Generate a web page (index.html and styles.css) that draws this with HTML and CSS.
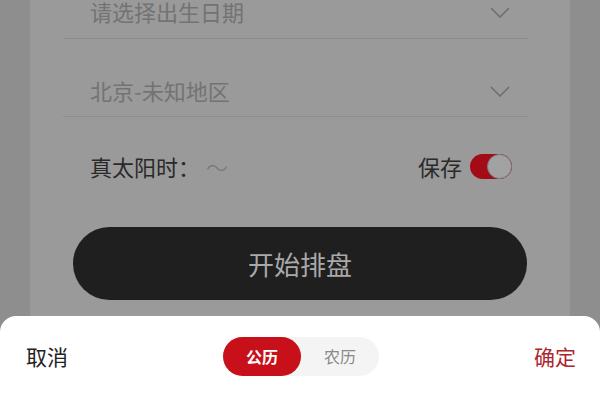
FILE: index.html
```html
<!DOCTYPE html>
<html lang="zh-CN">
<head>
    <meta charset="UTF-8">
    <meta name="viewport" content="width=device-width, initial-scale=1.0">
    <title>排盘</title>
    <link rel="stylesheet" href="styles.css">
</head>
<body>
    <div class="page">
        <div class="card">
            <!-- birth date picker -->
            <div class="field first">
                <span class="placeholder">请选择出生日期</span>
                <svg class="chevron" width="20" height="11" viewBox="0 0 20 11"><polyline points="1,1 10,10 19,1" fill="none" stroke="#6f6f6f" stroke-width="1.6"/></svg>
            </div>
            <!-- place picker -->
            <div class="field">
                <span class="placeholder">北京-未知地区</span>
                <svg class="chevron" width="20" height="11" viewBox="0 0 20 11"><polyline points="1,1 10,10 19,1" fill="none" stroke="#6f6f6f" stroke-width="1.6"/></svg>
            </div>

            <div class="sun-row">
                <span class="sun-label">真太阳时：<span class="tilde">～</span></span>
                <span class="save">
                    保存
                    <span class="toggle"><span class="knob"></span></span>
                </span>
            </div>

            <button class="start">开始排盘</button>
        </div>

        <!-- bottom sheet over the dimmed page -->
        <div class="sheet">
            <div class="sheet-head">
                <span class="cancel">取消</span>
                <div class="seg">
                    <span class="seg-item active">公历</span>
                    <span class="seg-item">农历</span>
                </div>
                <span class="ok">确定</span>
            </div>
        </div>
    </div>
</body>
</html>
```

FILE: styles.css
```css
body {
    margin: 0;
    font-family: "Noto Sans CJK SC", "Noto Sans", sans-serif;
    background-color: #8e8e8e;
}
.page {
    position: relative;
    width: 600px;
    height: 400px;
    overflow: hidden;
}
.card {
    margin: 0 30px;
    height: 100%;
    background-color: #9a9a9a;
    display: flex;
    flex-direction: column;
}
.field {
    margin: 0 42px 0 33px;
    height: 65px;
    border-bottom: 1px solid #8d8d8d;
    padding: 0 18px 12px 27px;
    display: flex;
    align-items: flex-end;
    justify-content: space-between;
}
.field.first {
    margin-top: -38px;
    height: 63px;
    padding-bottom: 13px;
}
.placeholder {
    font-size: 22px;
    line-height: 28px;
    color: #737373;
}
.chevron {
    margin-bottom: 7px;
}
.sun-row {
    margin: 24px 42px 0 33px;
    padding: 0 16px 0 27px;
    height: 50px;
    display: flex;
    align-items: center;
    justify-content: space-between;
    font-size: 22px;
    color: #2a2a2a;
}
.tilde {
    color: #767676;
    font-weight: 300;
    margin-left: 6px;
}
.save {
    display: flex;
    align-items: center;
    gap: 8px;
}
.toggle {
    width: 42px;
    height: 25px;
    border-radius: 13px;
    background-color: #a30c17;
    position: relative;
}
.knob {
    position: absolute;
    right: 0;
    top: 0;
    width: 23px;
    height: 23px;
    border-radius: 50%;
    background-color: #a2a2a2;
    border: 1px solid #7d7d7d;
}
.start {
    margin: 36px 0 0 43px;
    width: 454px;
    height: 73px;
    border: none;
    border-radius: 37px;
    background-color: #1f1f1f;
    color: #a9a9a9;
    font-family: inherit;
    font-size: 26px;
}
.sheet {
    position: absolute;
    left: 0;
    right: 0;
    bottom: 0;
    height: 84px;
    background-color: #fff;
    border-radius: 16px 16px 0 0;
}
.sheet-head {
    display: grid;
    grid-template-columns: 1fr auto 1fr;
    align-items: center;
    padding: 20px 24px 0 26px;
    height: 40px;
}
.cancel {
    font-size: 21px;
    color: #222;
}
.ok {
    justify-self: end;
    font-size: 21px;
    color: #ad262d;
}
.seg {
    display: flex;
    width: 156px;
    height: 39px;
    border-radius: 20px;
    background-color: #f4f4f4;
}
.seg-item {
    flex: 1;
    display: flex;
    align-items: center;
    justify-content: center;
    font-size: 16px;
    color: #8a8a8a;
    border-radius: 20px;
}
.seg-item.active {
    background-color: #c8101b;
    color: #fff;
    font-weight: bold;
}
```
